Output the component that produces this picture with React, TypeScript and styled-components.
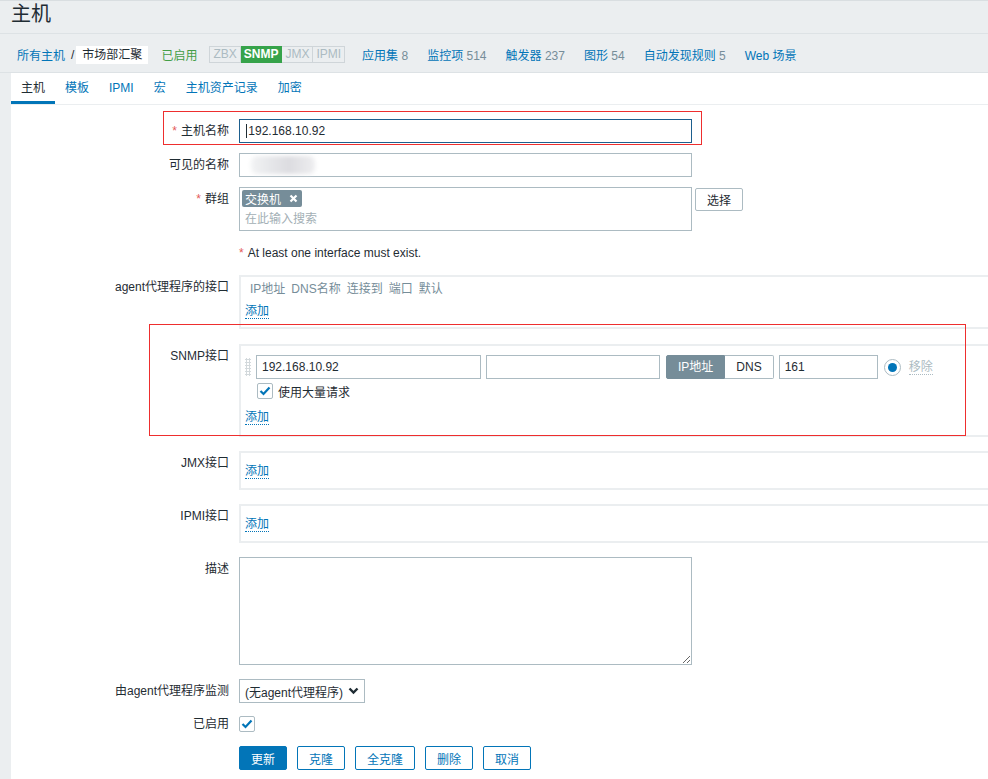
import styled, { createGlobalStyle } from "styled-components";

const GlobalStyle = createGlobalStyle`
  html, body { margin: 0; padding: 0; }
  body {
    background: #ebeef0;
    font-family: "Liberation Sans", Arial, "Noto Sans CJK SC", sans-serif;
    font-size: 12px;
    color: #1f2c33;
    overflow: hidden;
  }
  * { box-sizing: border-box; }
`;

const SPage = styled.div`
  position: relative;
  min-height: 779px;
  border-top: 1px solid #d9dee1;
`;

const SHeader = styled.div`
  height: 33px;
  padding-left: 11px;
  border-bottom: 1px solid #dde2e5;
`;

const STitle = styled.h1`
  margin: 0;
  font-size: 20px;
  font-weight: normal;
  line-height: 27px;
`;

const SNav = styled.div`
  display: flex;
  align-items: center;
  height: 39px;
  padding: 3px 0 0 17px;
  border-bottom: 1px solid #dde2e5;
`;

const SCrumbLink = styled.span`
  color: #0275b8;
`;

const SCrumbSep = styled.span`
  margin: 0 2px 0 6px;
`;

const SCrumbCurrent = styled.span`
  background: #fff;
  padding: 0 6px;
  line-height: 18px;
`;

const SStatus = styled.span`
  margin-left: 13px;
  color: #429e47;
`;

const SAvail = styled.div`
  display: flex;
  margin-left: 12px;
`;

const SAvailItem = styled.span<{ $on?: boolean }>`
  padding: 0 3px;
  line-height: 15px;
  border: 1px solid ${(p) => (p.$on ? "#36a34a" : "#cfd5d9")};
  background: ${(p) => (p.$on ? "#36a34a" : "#ebeef0")};
  color: ${(p) => (p.$on ? "#fff" : "#acbbc2")};
  font-weight: ${(p) => (p.$on ? "bold" : "normal")};
  & + & {
    border-left: none;
  }
`;

const SNavLinks = styled.div`
  display: flex;
  gap: 19px;
  margin-left: 17px;
`;

const SNavLink = styled.span`
  color: #0275b8;
`;

const SCount = styled.span`
  color: #768d99;
`;

const SPanel = styled.div`
  margin-left: 11px;
  background: #fff;
  min-height: 706px;
`;

const STabs = styled.ul`
  display: flex;
  margin: 0;
  padding: 0;
  list-style: none;
  border-bottom: 1px solid #ebeef0;
`;

const STab = styled.li<{ $active?: boolean }>`
  padding: 2px 10px 0;
  height: 31px;
  line-height: 26px;
  border-bottom: 3px solid ${(p) => (p.$active ? "#0275b8" : "transparent")};
  color: ${(p) => (p.$active ? "#1f2c33" : "#0275b8")};
`;

const SForm = styled.div`
  padding-top: 14px;
`;

const SRow = styled.div<{ $mt?: number }>`
  display: grid;
  grid-template-columns: 218px 1fr;
  column-gap: 10px;
  margin-top: ${(p) => p.$mt ?? 10}px;
`;

const SLabel = styled.div`
  text-align: right;
  line-height: 24px;
  white-space: nowrap;
`;

const SAsterisk = styled.span`
  color: #e45959;
  margin-right: 4px;
`;

const SFieldWrap = styled.div`
  position: relative;
  width: 453px;
`;

const STextBox = styled.input<{ $w?: number; $focused?: boolean }>`
  display: block;
  width: ${(p) => p.$w ?? 453}px;
  height: 24px;
  padding: 0 5px;
  border: 1px solid ${(p) => (p.$focused ? "#1d5f8e" : "#acbbc2")};
  font: inherit;
  color: #1f2c33;
  background: #fff;
  outline: none;
`;

const SCaret = styled.span`
  position: absolute;
  left: 7px;
  top: 5px;
  width: 1px;
  height: 14px;
  background: #1f2c33;
`;

const SSmudge = styled.span`
  position: absolute;
  left: 12px;
  top: 3px;
  width: 64px;
  height: 18px;
  border-radius: 6px;
  background: linear-gradient(90deg, #f2f3f4 0%, #e6e7ea 30%, #dcdce0 60%, #eeeef0 100%);
  filter: blur(2px);
`;

const SGroupLine = styled.div`
  display: flex;
  align-items: flex-start;
`;

const SMulti = styled.div`
  width: 453px;
  height: 44px;
  border: 1px solid #acbbc2;
  padding: 2px;
`;

const STag = styled.span`
  display: inline-flex;
  align-items: center;
  gap: 8px;
  height: 17px;
  padding: 0 4px 0 3px;
  background: #768d99;
  color: #fff;
  border-radius: 2px;
`;

const SPlaceholder = styled.div`
  padding: 3px 0 0 3px;
  color: #a3afb5;
  line-height: 18px;
`;

const SGreyBtn = styled.button`
  margin: 1px 0 0 3px;
  height: 23px;
  padding: 0 11px;
  border: 1px solid #acbbc2;
  border-radius: 2px;
  background: #fff;
  color: #1f2c33;
  font: inherit;
`;

const SHelp = styled.div`
  line-height: 24px;
`;

const SIfaceBlock = styled.div<{ $pad: string }>`
  border: 2px solid #ebeef0;
  border-right: none;
  padding: ${(p) => p.$pad};
`;

const SIfaceHead = styled.div`
  display: flex;
  gap: 6px;
  padding-left: 5px;
  line-height: 22px;
  color: #768d99;
`;

const SAddRow = styled.div<{ $mt?: number }>`
  display: flex;
  align-items: center;
  height: 22px;
  margin-top: ${(p) => p.$mt ?? 0}px;
`;

const SAddLink = styled.span<{ $muted?: boolean }>`
  line-height: 14px;
  color: ${(p) => (p.$muted ? "#acbbc2" : "#0275b8")};
  border-bottom: 1px dotted ${(p) => (p.$muted ? "#acbbc2" : "#0275b8")};
`;

const SIfaceRow = styled.div`
  display: flex;
  align-items: center;
  height: 24px;
`;

const SDrag = styled.span`
  width: 6px;
  height: 18px;
  margin-right: 5px;
  background-image: radial-gradient(circle, #d3d9dc 1px, transparent 1.2px);
  background-size: 3px 3px;
`;

const SToggle = styled.div`
  display: flex;
  margin: 0 5px 0 6px;
`;

const SToggleBtn = styled.span<{ $active?: boolean }>`
  height: 24px;
  line-height: 22px;
  padding: 0 11px;
  border: 1px solid ${(p) => (p.$active ? "#768d99" : "#acbbc2")};
  background: ${(p) => (p.$active ? "#768d99" : "#fff")};
  color: ${(p) => (p.$active ? "#fff" : "#1f2c33")};
  &:first-child {
    border-radius: 2px 0 0 2px;
  }
  &:last-child {
    border-radius: 0 2px 2px 0;
    border-left: none;
  }
`;

const SRadio = styled.span`
  display: flex;
  align-items: center;
  justify-content: center;
  width: 17px;
  height: 17px;
  margin: 0 8px 0 6px;
  border: 1px solid #acbbc2;
  border-radius: 50%;
  &::after {
    content: "";
    width: 9px;
    height: 9px;
    border-radius: 50%;
    background: #0275b8;
  }
`;

const SCheckRow = styled.div`
  display: flex;
  align-items: center;
  gap: 5px;
  margin: 4px 0 0 12px;
  height: 16px;
`;

const SCheck = styled.span`
  display: inline-flex;
  align-items: center;
  justify-content: center;
  width: 16px;
  height: 16px;
  border: 1px solid #acbbc2;
  border-radius: 2px;
  background: #fff;
`;

const SCheckCell = styled.div`
  display: flex;
  align-items: center;
  height: 24px;
`;

const STextArea = styled.textarea`
  display: block;
  width: 453px;
  height: 108px;
  border: 1px solid #acbbc2;
  font: inherit;
  outline: none;
  resize: both;
`;

const SSelect = styled.div`
  display: flex;
  align-items: center;
  justify-content: space-between;
  width: 126px;
  height: 24px;
  padding: 0 5px;
  border: 1px solid #acbbc2;
  background: #fff;
`;

const SButtons = styled.div`
  display: flex;
  gap: 10px;
`;

const SButton = styled.button<{ $primary?: boolean }>`
  height: 24px;
  padding: 0 11px;
  border: 1px solid #0275b8;
  border-radius: 2px;
  background: ${(p) => (p.$primary ? "#0275b8" : "#fff")};
  color: ${(p) => (p.$primary ? "#fff" : "#0275b8")};
  font: inherit;
`;

const SAnnot = styled.div<{ $x: number; $y: number; $w: number; $h: number }>`
  position: absolute;
  left: ${(p) => p.$x}px;
  top: ${(p) => p.$y}px;
  width: ${(p) => p.$w}px;
  height: ${(p) => p.$h}px;
  border: 1px solid #ee2e2e;
  pointer-events: none;
`;

const CheckMark = () => (
  <svg width="12" height="10" viewBox="0 0 12 10">
    <polyline points="1.5,5 4.5,8 10.5,1.5" fill="none" stroke="#0275b8" strokeWidth="2.2" />
  </svg>
);

const Chevron = () => (
  <svg width="11" height="8" viewBox="0 0 11 8">
    <polyline points="1.5,1.5 5.5,5.5 9.5,1.5" fill="none" stroke="#1f2c33" strokeWidth="2.4" />
  </svg>
);

const CloseX = () => (
  <svg width="9" height="9" viewBox="0 0 9 9">
    <path d="M1.5 1.5 L7.5 7.5 M7.5 1.5 L1.5 7.5" stroke="#fff" strokeWidth="2.2" />
  </svg>
);

function App() {
  const tabs = ["主机", "模板", "IPMI", "宏", "主机资产记录", "加密"];
  const links: Array<[string, string]> = [
    ["应用集", "8"],
    ["监控项", "514"],
    ["触发器", "237"],
    ["图形", "54"],
    ["自动发现规则", "5"],
    ["Web 场景", ""],
  ];

  return (
    <SPage>
      <GlobalStyle />
      <SHeader>
        <STitle>主机</STitle>
      </SHeader>
      <SNav>
        <SCrumbLink>所有主机</SCrumbLink>
        <SCrumbSep>/</SCrumbSep>
        <SCrumbCurrent>市场部汇聚</SCrumbCurrent>
        <SStatus>已启用</SStatus>
        <SAvail>
          <SAvailItem>ZBX</SAvailItem>
          <SAvailItem $on>SNMP</SAvailItem>
          <SAvailItem>JMX</SAvailItem>
          <SAvailItem>IPMI</SAvailItem>
        </SAvail>
        <SNavLinks>
          {links.map(([name, count]) => (
            <SNavLink key={name}>
              {name}
              {count && <SCount> {count}</SCount>}
            </SNavLink>
          ))}
        </SNavLinks>
      </SNav>

      <SPanel>
        <STabs>
          {tabs.map((t, i) => (
            <STab key={t} $active={i === 0}>
              {t}
            </STab>
          ))}
        </STabs>

        <SForm>
          <SRow $mt={0}>
            <SLabel>
              <SAsterisk>*</SAsterisk>主机名称
            </SLabel>
            <SFieldWrap>
              <STextBox $focused readOnly value=" 192.168.10.92" />
              <SCaret />
            </SFieldWrap>
          </SRow>

          <SRow>
            <SLabel>可见的名称</SLabel>
            <SFieldWrap>
              <STextBox readOnly value="" />
              <SSmudge />
            </SFieldWrap>
          </SRow>

          <SRow>
            <SLabel>
              <SAsterisk>*</SAsterisk>群组
            </SLabel>
            <SGroupLine>
              <SMulti>
                <STag>
                  交换机
                  <CloseX />
                </STag>
                <SPlaceholder>在此输入搜索</SPlaceholder>
              </SMulti>
              <SGreyBtn>选择</SGreyBtn>
            </SGroupLine>
          </SRow>

          <SRow>
            <SLabel />
            <SHelp>
              <SAsterisk>*</SAsterisk>At least one interface must exist.
            </SHelp>
          </SRow>

          <SRow>
            <SLabel>agent代理程序的接口</SLabel>
            <SIfaceBlock $pad="1px 0 5px 4px">
              <SIfaceHead>
                <span>IP地址</span>
                <span>DNS名称</span>
                <span>连接到</span>
                <span>端口</span>
                <span>默认</span>
              </SIfaceHead>
              <SAddRow>
                <SAddLink>添加</SAddLink>
              </SAddRow>
            </SIfaceBlock>
          </SRow>

          <SRow $mt={15}>
            <SLabel>SNMP接口</SLabel>
            <SIfaceBlock $pad="9px 0 7px 4px">
              <SIfaceRow>
                <SDrag />
                <STextBox $w={225} readOnly value="192.168.10.92" />
                <STextBox $w={174} readOnly value="" style={{ marginLeft: 5 }} />
                <SToggle>
                  <SToggleBtn $active>IP地址</SToggleBtn>
                  <SToggleBtn>DNS</SToggleBtn>
                </SToggle>
                <STextBox $w={99} readOnly value="161" />
                <SRadio />
                <SAddLink $muted>移除</SAddLink>
              </SIfaceRow>
              <SCheckRow>
                <SCheck>
                  <CheckMark />
                </SCheck>
                使用大量请求
              </SCheckRow>
              <SAddRow $mt={7}>
                <SAddLink>添加</SAddLink>
              </SAddRow>
            </SIfaceBlock>
          </SRow>

          <SRow $mt={14}>
            <SLabel>JMX接口</SLabel>
            <SIfaceBlock $pad="7px 0 6px 4px">
              <SAddRow>
                <SAddLink>添加</SAddLink>
              </SAddRow>
            </SIfaceBlock>
          </SRow>

          <SRow $mt={14}>
            <SLabel>IPMI接口</SLabel>
            <SIfaceBlock $pad="7px 0 6px 4px">
              <SAddRow>
                <SAddLink>添加</SAddLink>
              </SAddRow>
            </SIfaceBlock>
          </SRow>

          <SRow $mt={14}>
            <SLabel>描述</SLabel>
            <STextArea readOnly value="" />
          </SRow>

          <SRow $mt={14}>
            <SLabel>由agent代理程序监测</SLabel>
            <SSelect>
              <span>(无agent代理程序)</span>
              <Chevron />
            </SSelect>
          </SRow>

          <SRow $mt={9}>
            <SLabel>已启用</SLabel>
            <SCheckCell>
              <SCheck>
                <CheckMark />
              </SCheck>
            </SCheckCell>
          </SRow>

          <SRow $mt={10}>
            <SLabel />
            <SButtons>
              <SButton $primary>更新</SButton>
              <SButton>克隆</SButton>
              <SButton>全克隆</SButton>
              <SButton>删除</SButton>
              <SButton>取消</SButton>
            </SButtons>
          </SRow>
        </SForm>
      </SPanel>

      <SAnnot $x={163} $y={110} $w={539} $h={34} />
      <SAnnot $x={149} $y={323} $w={817} $h={112} />
    </SPage>
  );
}

export default App;
